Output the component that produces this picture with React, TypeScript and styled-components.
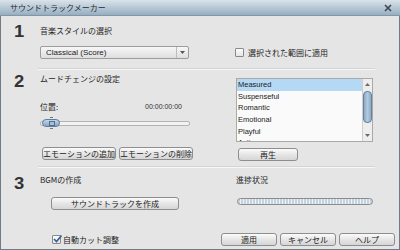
import React from 'react';
import styled, { createGlobalStyle, css } from 'styled-components';

const jp = `"Noto Sans CJK JP", "Liberation Sans", sans-serif`;
const latin = `"Liberation Sans", "Noto Sans CJK JP", sans-serif`;

const GlobalStyle = createGlobalStyle`
  html, body { margin: 0; padding: 0; background: #e5e5e5; }
  body { font-family: ${jp}; color: #222; }
  * { box-sizing: border-box; }
`;

const moods = ['Measured', 'Suspenseful', 'Romantic', 'Emotional', 'Playful', 'Action'];

const App: React.FC = () => {
  return (
    <>
      <GlobalStyle />
      <Window>
        <TitleBar>
          <Title>サウンドトラックメーカー</Title>
          <CloseIcon width="8" height="8" viewBox="0 0 8 8">
            <path d="M1 1 L7 7 M7 1 L1 7" stroke="#3d4650" strokeWidth="1.6" />
          </CloseIcon>
        </TitleBar>

        <StyleSection>
          <Num>1</Num>
          <Label>音楽スタイルの選択</Label>
          <span />
          <Dropdown>
            <DropText>Classical (Score)</DropText>
            <DropArrow>
              <svg width="5" height="3" viewBox="0 0 5 3">
                <path d="M0 0 H5 L2.5 3 Z" fill="#555" />
              </svg>
            </DropArrow>
          </Dropdown>
          <CheckRow>
            <Check />
            <CheckText>選択された範囲に適用</CheckText>
          </CheckRow>
        </StyleSection>

        <Separator />

        <Section $top={3} $bottom={5}>
          <Num $top={2}>2</Num>
          <LeftCol>
            <Label>ムードチェンジの設定</Label>
            <PosRow>
              <Label>位置:</Label>
              <Time>00:00:00:00</Time>
            </PosRow>
            <Slider>
              <Thumb>
                <Tick $pos="top" />
                <Tick $pos="bottom" />
              </Thumb>
            </Slider>
            <ButtonRow>
              <Button $w={74}>エモーションの追加</Button>
              <Button $w={74}>エモーションの削除</Button>
            </ButtonRow>
          </LeftCol>
          <RightCol>
            <List>
              <Items>
                {moods.map((m, i) => (
                  <Item key={m} $selected={i === 0}>
                    {m}
                  </Item>
                ))}
              </Items>
              <Scrollbar>
                <ScrollArrow>
                  <svg width="5" height="3" viewBox="0 0 5 3">
                    <path d="M0 3 H5 L2.5 0 Z" fill="#6a6a6a" />
                  </svg>
                </ScrollArrow>
                <ScrollTrack>
                  <ScrollThumb />
                </ScrollTrack>
                <ScrollArrow>
                  <svg width="5" height="3" viewBox="0 0 5 3">
                    <path d="M0 0 H5 L2.5 3 Z" fill="#6a6a6a" />
                  </svg>
                </ScrollArrow>
              </Scrollbar>
            </List>
            <Button $w={60} $left={2} $mt={6}>
              再生
            </Button>
          </RightCol>
        </Section>

        <Separator />

        <Section $top={6} $bottom={0}>
          <Num $top={3}>3</Num>
          <LeftCol>
            <Label>BGMの作成</Label>
            <Button $w={128} $left={11} $mt={11}>
              サウンドトラックを作成
            </Button>
          </LeftCol>
          <RightCol>
            <Label>進捗状況</Label>
            <Progress />
          </RightCol>
        </Section>

        <Footer>
          <CheckRow>
            <Check $checked>
              <svg width="9" height="8" viewBox="0 0 9 8">
                <path d="M1 4 L3.5 6.5 L8.5 0.5" stroke="#2e5f9a" strokeWidth="1.6" fill="none" />
              </svg>
            </Check>
            <CheckText $gap={2}>自動カット調整</CheckText>
          </CheckRow>
          <FooterButtons>
            <Button $w={56}>適用</Button>
            <Button $w={56}>キャンセル</Button>
            <Button $w={56}>ヘルプ</Button>
          </FooterButtons>
        </Footer>
      </Window>
    </>
  );
};

const Window = styled.div`
  width: 400px;
  height: 250px;
  display: flex;
  flex-direction: column;
  background: #e5e5e5;
  border: 1px solid #6f7b86;
  border-top: none;
`;

const TitleBar = styled.div`
  height: 16px;
  margin: 0 -1px;
  display: flex;
  align-items: center;
  justify-content: space-between;
  padding: 0 8px 0 10px;
  background: linear-gradient(#d9e3ea, #b5c6d3 55%, #98afc1);
  border-bottom: 1px solid #8197a8;
`;

const Title = styled.span`
  font-size: 8px;
  line-height: 12px;
  color: #1f2b35;
`;

const CloseIcon = styled.svg`
  display: block;
`;

const StyleSection = styled.div`
  display: grid;
  grid-template-columns: 39px 195px 140px;
  grid-template-rows: 12px 13px;
  row-gap: 9px;
  padding: 9px 0 9px;
`;

const Section = styled.div<{ $top: number; $bottom: number }>`
  display: flex;
  padding-top: ${p => p.$top}px;
  padding-bottom: ${p => p.$bottom}px;
`;

const Num = styled.div<{ $top?: number }>`
  grid-row: 1 / span 2;
  width: 39px;
  flex: none;
  padding-left: 13px;
  padding-top: ${p => p.$top ?? 0}px;
  font-family: "Liberation Sans", sans-serif;
  font-weight: 900;
  font-size: 16px;
  line-height: 13px;
  color: #333;
  transform: scaleX(1.15);
  transform-origin: 13px 0;
`;

const Label = styled.div`
  font-size: 8px;
  line-height: 12px;
  color: #262626;
  white-space: nowrap;
`;

const Dropdown = styled.div`
  width: 149px;
  height: 13px;
  display: flex;
  border: 1px solid #9c9c9c;
  border-radius: 2px;
  background: linear-gradient(#f7f7f7, #dedede);
`;

const DropText = styled.span`
  flex: 1;
  padding-left: 5px;
  font-family: ${latin};
  font-size: 8px;
  line-height: 11px;
`;

const DropArrow = styled.span`
  width: 12px;
  display: flex;
  align-items: center;
  justify-content: center;
  border-left: 1px solid #bcbcbc;
`;

const CheckRow = styled.div`
  display: flex;
  align-items: center;
`;

const Check = styled.span<{ $checked?: boolean }>`
  position: relative;
  width: 9px;
  height: 9px;
  flex: none;
  border: 1px solid #8a8a8a;
  border-radius: 1px;
  background: linear-gradient(#fdfdfd, #e4e4e4);

  svg {
    position: absolute;
    left: 0;
    top: -1px;
  }
`;

const CheckText = styled.span<{ $gap?: number }>`
  margin-left: ${p => p.$gap ?? 4}px;
  font-size: 8px;
  line-height: 12px;
`;

const Separator = styled.div`
  margin: 0 24px 0 37px;
  border-top: 1px solid #d3d3d3;
  border-bottom: 1px solid #f7f7f7;
`;

const LeftCol = styled.div`
  width: 196px;
  flex: none;
  display: flex;
  flex-direction: column;
  align-items: flex-start;
`;

const RightCol = styled.div`
  width: 140px;
  display: flex;
  flex-direction: column;
  align-items: flex-start;
`;

const PosRow = styled.div`
  width: 142px;
  margin-top: 16px;
  display: flex;
  justify-content: space-between;
`;

const Time = styled.span`
  font-family: ${latin};
  font-size: 7px;
  line-height: 12px;
  color: #333;
`;

const Slider = styled.div`
  position: relative;
  width: 150px;
  height: 9px;
  margin-top: 5px;
  display: flex;
  align-items: center;

  &::before {
    content: '';
    position: absolute;
    left: 0;
    right: 0;
    top: 3px;
    height: 3px;
    border: 1px solid #b4b4b4;
    border-radius: 2px;
    background: #f2f2f2;
  }
`;

const Thumb = styled.span`
  position: relative;
  margin-left: 2px;
  width: 18px;
  height: 8px;
  border: 1px solid #5e7f9d;
  border-radius: 4px;
  background: linear-gradient(#c4d6e6, #86a6c2);

  &::after {
    content: '';
    position: absolute;
    left: 6px;
    top: 1px;
    width: 4px;
    height: 3px;
    border: 1px solid #4e6f8d;
    background: #a9c0d5;
  }
`;

const Tick = styled.span<{ $pos: 'top' | 'bottom' }>`
  position: absolute;
  left: 7px;
  width: 3px;
  height: 2px;
  ${p =>
    p.$pos === 'top'
      ? css`
          top: -4px;
          border-bottom: 1px solid #777;
        `
      : css`
          bottom: -4px;
          border-top: 1px solid #777;
        `}
`;

const ButtonRow = styled.div`
  display: flex;
  gap: 3px;
  margin-top: 20px;
  margin-left: 2px;
`;

const Button = styled.button<{ $w: number; $left?: number; $mt?: number }>`
  width: ${p => p.$w}px;
  height: 13px;
  padding: 0;
  margin-left: ${p => p.$left ?? 0}px;
  margin-top: ${p => p.$mt ?? 0}px;
  border: 1px solid #8e8e8e;
  border-radius: 3px;
  background: linear-gradient(#fbfbfb, #e6e6e6 50%, #d6d6d6);
  font-family: ${jp};
  font-size: 8px;
  line-height: 11px;
  color: #222;
  white-space: nowrap;
`;

const List = styled.div`
  width: 137px;
  height: 64px;
  margin-top: 5px;
  display: flex;
  border: 1px solid #a9a9a9;
  background: #fafafa;
`;

const Items = styled.div`
  flex: 1;
  overflow: hidden;
`;

const Item = styled.div<{ $selected?: boolean }>`
  height: 11.7px;
  padding-left: 1px;
  font-family: ${latin};
  font-size: 7.5px;
  line-height: 11.7px;
  color: #222;
  ${p =>
    p.$selected &&
    css`
      background: #b5d8f5;
    `}
`;

const Scrollbar = styled.div`
  width: 10px;
  display: flex;
  flex-direction: column;
  border-left: 1px solid #cfcfcf;
  background: #eeeeee;
`;

const ScrollArrow = styled.div`
  height: 11px;
  display: flex;
  align-items: center;
  justify-content: center;
`;

const ScrollTrack = styled.div`
  flex: 1;
  display: flex;
  flex-direction: column;
`;

const ScrollThumb = styled.div`
  height: 32px;
  margin: 1px 0 0;
  border: 1px solid #62829f;
  border-radius: 4px;
  background: linear-gradient(90deg, #8eabc5, #b3c9dc 50%, #8eabc5);
`;

const Progress = styled.div`
  width: 136px;
  height: 7px;
  margin-top: 12px;
  margin-left: 1px;
  border: 1px solid #8c8c8c;
  border-radius: 4px;
  background: repeating-linear-gradient(90deg, #c5d3e0 0 2px, #eef2f6 2px 3px);
`;

const Footer = styled.div`
  margin-top: auto;
  display: flex;
  align-items: center;
  padding: 0 4px 3px 51px;
`;

const FooterButtons = styled.div`
  margin-left: auto;
  display: flex;
  gap: 3px;
`;

export default App;
